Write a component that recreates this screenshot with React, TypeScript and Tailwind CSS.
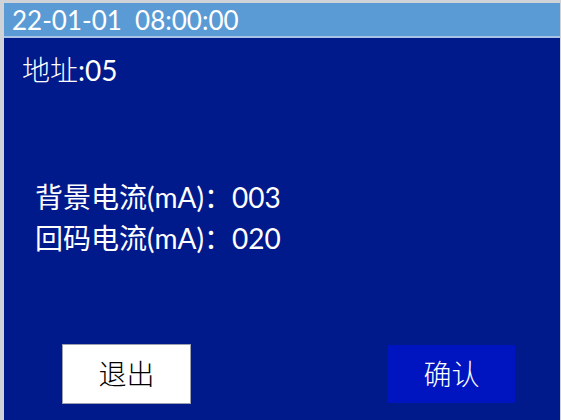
import React from 'react';

const font = { fontFamily: 'Lato, "Noto Sans CJK SC", sans-serif' };

export default function App() {
    return (
        <div
            className="w-[561px] h-[420px] flex flex-col border-l-4 border-t-[3px] border-r border-[#cfd3d8] bg-[#001a8c] text-white overflow-hidden"
            style={font}
        >
            {/* status bar */}
            <div className="h-[33px] bg-[#5b9bd5] flex items-center pl-[8px] text-[26px] leading-none whitespace-pre">
                22-01-01  08:00:00
            </div>
            <div className="h-[2px] bg-[#a8c4e4]" />

            <div className="flex-1 flex flex-col">
                <div className="mt-[15px] pl-[18px] text-[28px] leading-[34px]">
                    <span className="font-light">地址</span>:05
                </div>

                <div className="mt-[90px] pl-[31px] text-[28px] leading-[41px]">
                    <div>背景电流(mA)：003</div>
                    <div>回码电流(mA)：020</div>
                </div>

                <div className="mt-auto mb-[16px] flex items-center justify-between pl-[58px] pr-[45px]">
                    <button className="w-[129px] h-[60px] bg-white border border-[#9aa0b0] text-black text-[28px] font-light">
                        退出
                    </button>
                    <button className="w-[127px] h-[58px] bg-[#0014bf] text-white text-[28px] font-light">
                        确认
                    </button>
                </div>
            </div>
        </div>
    );
}
